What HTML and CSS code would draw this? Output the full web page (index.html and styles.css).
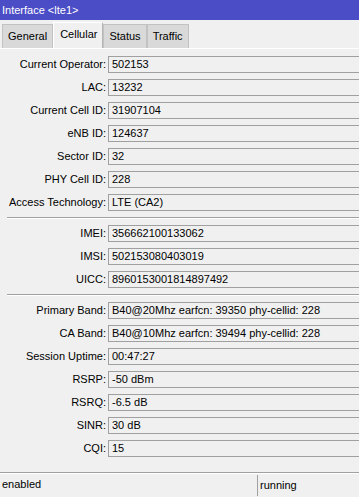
FILE: index.html
```html
<!DOCTYPE html>
<html>
<head>
  <meta name="viewport" content="width=device-width, initial-scale=1.0">
  <link rel="stylesheet" href="styles.css">
</head>
<body>
  <div class="titlebar">Interface &lt;lte1&gt;</div>

  <div class="tabs">
    <div class="tab">General</div>
    <div class="tab active">Cellular</div>
    <div class="tab">Status</div>
    <div class="tab">Traffic</div>
  </div>

  <div class="panel">
    <div class="group">
      <div class="row"><span class="label">Current Operator:</span><span class="field">502153</span></div>
      <div class="row"><span class="label">LAC:</span><span class="field">13232</span></div>
      <div class="row"><span class="label">Current Cell ID:</span><span class="field">31907104</span></div>
      <div class="row"><span class="label">eNB ID:</span><span class="field">124637</span></div>
      <div class="row"><span class="label">Sector ID:</span><span class="field">32</span></div>
      <div class="row"><span class="label">PHY Cell ID:</span><span class="field">228</span></div>
      <div class="row"><span class="label">Access Technology:</span><span class="field">LTE (CA2)</span></div>
    </div>

    <div class="sep"></div>

    <div class="group">
      <div class="row"><span class="label">IMEI:</span><span class="field">356662100133062</span></div>
      <div class="row"><span class="label">IMSI:</span><span class="field">502153080403019</span></div>
      <div class="row"><span class="label">UICC:</span><span class="field">8960153001814897492</span></div>
    </div>

    <div class="sep"></div>

    <div class="group">
      <div class="row"><span class="label">Primary Band:</span><span class="field">B40@20Mhz earfcn: 39350 phy-cellid: 228</span></div>
      <div class="row"><span class="label">CA Band:</span><span class="field">B40@10Mhz earfcn: 39494 phy-cellid: 228</span></div>
      <div class="row"><span class="label">Session Uptime:</span><span class="field">00:47:27</span></div>
      <div class="row"><span class="label">RSRP:</span><span class="field">-50 dBm</span></div>
      <div class="row"><span class="label">RSRQ:</span><span class="field">-6.5 dB</span></div>
      <div class="row"><span class="label">SINR:</span><span class="field">30 dB</span></div>
      <div class="row"><span class="label">CQI:</span><span class="field">15</span></div>
    </div>
  </div>

  <div class="statusbar">
    <div class="status_left">enabled</div>
    <div class="status_right">running</div>
  </div>
</body>
</html>
```

FILE: styles.css
```css
body {
  margin: 0;
  width: 359px;
  height: 497px;
  overflow: hidden;
  background-color: #f0f0f0;
  font-family: "Liberation Sans", Arial, sans-serif;
  font-size: 11px;
  color: #000;
}
.titlebar {
  height: 20px;
  line-height: 21px;
  padding-left: 2px;
  background-color: #4b4dc6;
  color: #fff;
  font-size: 11px;
}
.tabs {
  display: flex;
  align-items: flex-end;
  height: 28px;
  padding-left: 2px;
  border-bottom: 1px solid #fff;
}
.tab {
  box-sizing: border-box;
  height: 24px;
  line-height: 23px;
  padding: 0 5px;
  background-color: #d9d9d9;
  border: 1px solid #c2c2c2;
  border-bottom: none;
}
.tab.active {
  height: 26px;
  line-height: 22px;
  padding: 0 5px 0 6px;
  background-color: #f0f0f0;
  border-color: #fff #b5b5b5 #f0f0f0 #fff;
}
.panel {
  padding: 7px 0 15px 0;
}
.row {
  display: grid;
  grid-template-columns: 106px 1fr;
  column-gap: 2px;
  height: 17px;
  margin-bottom: 6px;
}
.row:last-child {
  margin-bottom: 0;
}
.label {
  text-align: right;
  line-height: 17px;
  white-space: nowrap;
}
.field {
  box-sizing: border-box;
  height: 17px;
  line-height: 15px;
  padding-left: 3px;
  margin-right: -2px;
  border: 1px solid #a0a0a0;
  background-color: #f0f0f0;
  white-space: nowrap;
}
.sep {
  margin: 6px 0 6px 7px;
  border-top: 1px solid #a0a0a0;
  border-bottom: 1px solid #fff;
}
.statusbar {
  display: flex;
  height: 23px;
  border-top: 1px solid #a0a0a0;
  box-shadow: inset 0 1px 0 #fff;
}
.status_left {
  flex: 1;
  line-height: 23px;
  padding-left: 2px;
}
.status_right {
  width: 99px;
  margin-top: 2px;
  line-height: 21px;
  padding-left: 2px;
  border-left: 1px solid #a0a0a0;
}
```
